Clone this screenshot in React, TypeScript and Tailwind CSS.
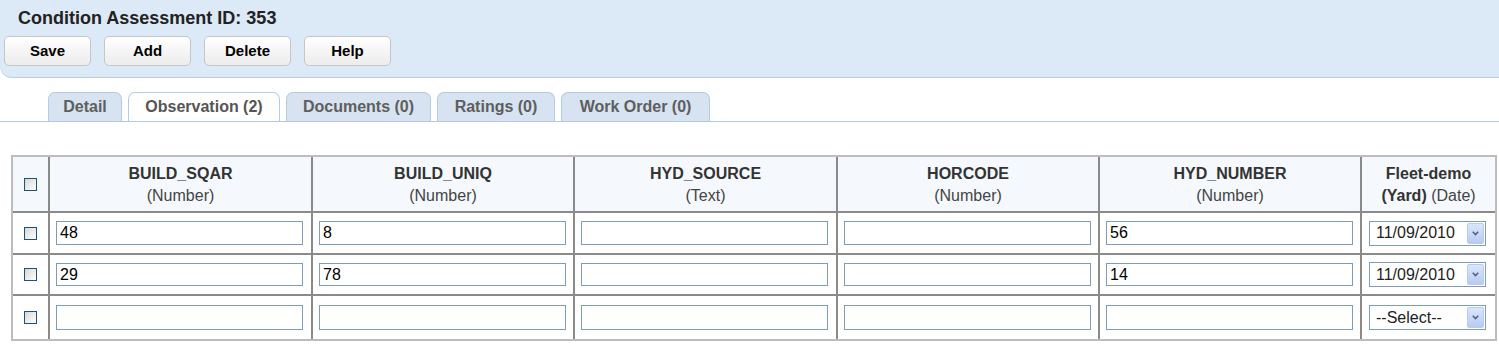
import React from "react";

const tabs = [
  { label: "Detail", w: "w-[74px]", active: false },
  { label: "Observation (2)", w: "w-[152px]", active: true },
  { label: "Documents (0)", w: "w-[145px]", active: false },
  { label: "Ratings (0)", w: "w-[118px]", active: false },
  { label: "Work Order (0)", w: "w-[149px]", active: false },
];

const fields = [
  { name: "BUILD_SQAR", type: "(Number)" },
  { name: "BUILD_UNIQ", type: "(Number)" },
  { name: "HYD_SOURCE", type: "(Text)" },
  { name: "HORCODE", type: "(Number)" },
  { name: "HYD_NUMBER", type: "(Number)" },
];

const rows = [
  { vals: ["48", "8", "", "", "56"], date: "11/09/2010", h: "h-[42px]" },
  { vals: ["29", "78", "", "", "14"], date: "11/09/2010", h: "h-[41px]" },
  { vals: ["", "", "", "", ""], date: "--Select--", h: "h-[45px]" },
];

const Check = () => (
  <input
    type="checkbox"
    className="appearance-none block mx-auto w-[13px] h-[13px] border border-[#1c5180] bg-linear-to-br from-[#d8d8d2] to-white"
  />
);

const Button = ({ label }: { label: string }) => (
  <button className="w-[87px] h-[30px] rounded-[5px] border border-[#c6c6c6] bg-linear-to-b from-white to-[#ececec] text-[15px] font-bold text-black">
    {label}
  </button>
);

const DateSelect = ({ value }: { value: string }) => (
  <div className="ml-[7px] w-[117px] h-[25px] border border-[#7f9db9] bg-white flex items-center justify-between">
    <span className="pl-[6px] text-[16px] text-[#222] leading-none">{value}</span>
    <span className="mr-[1px] w-[17px] h-[21px] rounded-[2px] border border-[#b8cbef] bg-linear-to-b from-[#dbe6fb] to-[#b7cbf2] flex items-center justify-center">
      <svg width="7" height="5" viewBox="0 0 7 5">
        <path d="M0.8 0.8 L3.5 3.6 L6.2 0.8" fill="none" stroke="#4b5f86" strokeWidth="1.5" />
      </svg>
    </span>
  </div>
);

export default function App() {
  return (
    <div className="w-[1499px] h-[345px] bg-white font-['Liberation_Sans',Arial,sans-serif] overflow-hidden">
      <div className="h-[78px] bg-[#dce9f6] border-b border-[#b7cee6] rounded-bl-[12px]">
        <h1 className="pl-[18px] pt-[8px] text-[18px] leading-[21px] font-bold text-[#222]">
          Condition Assessment ID: 353
        </h1>
        <div className="mt-[7px] pl-[4px] flex gap-[13px]">
          <Button label="Save" />
          <Button label="Add" />
          <Button label="Delete" />
          <Button label="Help" />
        </div>
      </div>

      <div className="mt-[14px] pl-[48px] flex items-end gap-[6px] border-b border-[#b3c9e1]">
        {tabs.map((t) => (
          <div
            key={t.label}
            className={`${t.w} h-[29px] flex items-center justify-center rounded-t-[7px] border border-b-0 text-[16px] font-bold ${
              t.active
                ? "bg-white border-[#b3cde8] text-[#555]"
                : "bg-[#d7e3f0] border-[#b3cbe4] text-[#5e5e5e]"
            }`}
          >
            {t.label}
          </div>
        ))}
      </div>

      <table className="ml-[11px] mt-[33px] w-[1486px] table-fixed border-separate border-spacing-0 border-2 border-[#bdbdbd] text-[16px]">
        <colgroup>
          <col className="w-[35px]" />
          <col className="w-[263px]" />
          <col className="w-[262px]" />
          <col className="w-[263px]" />
          <col className="w-[262px]" />
          <col className="w-[262px]" />
          <col className="w-[135px]" />
        </colgroup>
        <thead>
          <tr className="h-[54px] bg-[#f5f9fd]">
            <th className="p-0 align-middle">
              <Check />
            </th>
            {fields.map((f) => (
              <th key={f.name} className="p-0 pt-[2px] border-l-2 border-[#8a8a8a] leading-[22px] text-center align-middle">
                <div className="font-bold text-[#333]">{f.name}</div>
                <div className="font-normal text-[#444]">{f.type}</div>
              </th>
            ))}
            <th className="p-0 pt-[2px] border-l-2 border-[#8a8a8a] leading-[22px] text-center align-middle">
              <div className="font-bold text-[#333]">Fleet-demo</div>
              <div className="font-normal text-[#444]">
                <span className="font-bold text-[#333]">(Yard)</span> (Date)
              </div>
            </th>
          </tr>
        </thead>
        <tbody>
          {rows.map((r, i) => (
            <tr key={i} className={r.h}>
              <td className="p-0 border-t-2 border-[#8a8a8a] align-middle">
                <Check />
              </td>
              {r.vals.map((v, j) => (
                <td key={j} className="p-0 border-t-2 border-l-2 border-[#8a8a8a] align-middle">
                  <input
                    readOnly
                    value={v}
                    className={`block ml-[6px] w-[247px] ${i === 1 ? "h-[23px]" : i === 2 ? "h-[25px]" : "h-[24px]"} border border-[#7f9db9] pl-[3px] text-[16px] text-black outline-none`}
                  />
                </td>
              ))}
              <td className="p-0 border-t-2 border-l-2 border-[#8a8a8a] align-middle">
                <DateSelect value={r.date} />
              </td>
            </tr>
          ))}
        </tbody>
      </table>
    </div>
  );
}
